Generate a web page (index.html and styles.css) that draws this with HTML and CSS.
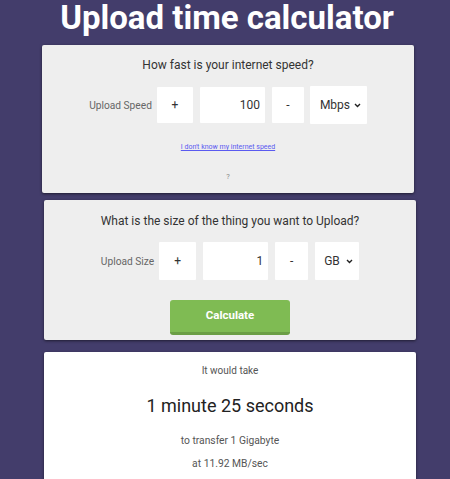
FILE: index.html
```html
<!DOCTYPE html>
<html lang="en">
<head>
<meta charset="utf-8">
<title>Upload time calculator</title>
<link rel="stylesheet" href="styles.css">
</head>
<body>
<main class="page">
  <h1 class="title">Upload time calculator</h1>

  <section class="card card-speed">
    <h2 class="card-heading">How fast is your internet speed?</h2>
    <div class="field-row">
      <label class="field-label">Upload Speed</label>
      <button class="box box-btn box-plus" type="button">+</button>
      <input class="box box-num" type="text" value="100">
      <button class="box box-btn box-minus" type="button">-</button>
      <div class="box box-select select-mbps">
        <span>Mbps</span>
        <svg class="chev" width="7" height="5" viewBox="0 0 7 5"><path d="M1 1 L3.5 3.5 L6 1" fill="none" stroke="#222" stroke-width="1.4"/></svg>
      </div>
    </div>
    <a class="help-link" href="#">I don't know my internet speed</a>
    <p class="question">?</p>
  </section>

  <section class="card card-size">
    <h2 class="card-heading">What is the size of the thing you want to Upload?</h2>
    <div class="field-row field-row-size">
      <label class="field-label">Upload Size</label>
      <button class="box box-btn box-plus2" type="button">+</button>
      <input class="box box-num" type="text" value="1">
      <button class="box box-btn box-minus2" type="button">-</button>
      <div class="box box-select select-gb">
        <span>GB</span>
        <svg class="chev" width="7" height="5" viewBox="0 0 7 5"><path d="M1 1 L3.5 3.5 L6 1" fill="none" stroke="#222" stroke-width="1.4"/></svg>
      </div>
    </div>
    <button class="calc-btn" type="button">Calculate</button>
  </section>

  <section class="card card-result">
    <p class="res-intro">It would take</p>
    <p class="res-time">1 minute 25 seconds</p>
    <p class="res-detail">to transfer 1 Gigabyte</p>
    <p class="res-rate">at 11.92 MB/sec</p>
  </section>
</main>
</body>
</html>
```

FILE: styles.css
```css
* { box-sizing: border-box; }

html, body {
  margin: 0;
  padding: 0;
  background: #433d6b;
  font-family: Roboto, "Liberation Sans", Arial, sans-serif;
  overflow: hidden;
}

.page {
  padding-left: 42px;
  width: 450px;
}

.title {
  margin: 0 0 10px -40px;
  width: 450px;
  text-align: center;
  color: #ffffff;
  font-size: 33px;
  line-height: 35px;
  font-weight: 700;
}

.card {
  width: 372px;
  background: #eeeeee;
  border-radius: 2px;
  box-shadow: 0 1px 3px rgba(0, 0, 0, 0.55);
  text-align: center;
}

.card-speed {
  padding: 12px 0 10px;
}

.card-size {
  margin: 7px 0 0 2px;
  padding: 13px 0 5px;
}

.card-result {
  margin: 12px 0 0 2px;
  background: #ffffff;
  padding: 12px 0 20px;
}

.card-heading {
  margin: 0;
  font-size: 12px;
  line-height: 16px;
  font-weight: 400;
  color: #333333;
}

.field-row {
  display: flex;
  justify-content: center;
  align-items: center;
  gap: 7px;
  margin-top: 14px;
  height: 36px;
}

.field-row-size {
  margin-top: 13px;
  height: 38px;
}

.field-label {
  font-size: 10.2px;
  color: #666666;
  margin-right: -2px;
}

.box {
  background: #ffffff;
  border: none;
  border-radius: 1px;
  height: 36px;
  font-family: inherit;
  font-size: 12px;
  color: #333333;
  padding: 0;
  margin: 0;
}

.field-row-size .box { height: 38px; }

.box-btn { text-align: center; }
.box-plus { width: 36px; }
.box-minus { width: 32px; }
.box-plus2 { width: 37px; }
.box-minus2 { width: 33px; }

.box-num {
  width: 65px;
  text-align: right;
  padding-right: 5px;
  outline: none;
}

.box-select {
  display: flex;
  align-items: center;
  justify-content: space-between;
  padding: 0 6px 0 10px;
  height: 38px;
}

.select-mbps { width: 57px; margin-left: -1px; }
.select-gb { width: 44px; padding-left: 9px; }

.chev { display: block; }

.help-link {
  display: block;
  width: max-content;
  margin: 18px auto 0;
  font-size: 7px;
  line-height: 12px;
  color: #5a5af0;
  text-decoration: underline;
}

.question {
  margin: 18px 0 0;
  font-size: 7.5px;
  line-height: 12px;
  color: #888888;
}

.calc-btn {
  display: block;
  margin: 20px auto 0;
  width: 120px;
  height: 35px;
  border: none;
  border-bottom: 3px solid #6b9e45;
  border-radius: 3px;
  background: #7fbb53;
  color: #ffffff;
  font-family: inherit;
  font-weight: 700;
  font-size: 11.5px;
  padding: 0 0 2px;
}

.card-result p { margin: 0; }

.res-intro {
  font-size: 10px;
  line-height: 14px;
  color: #555555;
}

.res-time {
  margin-top: 16px !important;
  font-size: 18px;
  line-height: 24px;
  color: #222222;
}

.res-detail {
  margin-top: 16px !important;
  font-size: 10.3px;
  line-height: 14px;
  color: #555555;
}

.res-rate {
  margin-top: 9px !important;
  font-size: 10.3px;
  line-height: 14px;
  color: #555555;
}
```
